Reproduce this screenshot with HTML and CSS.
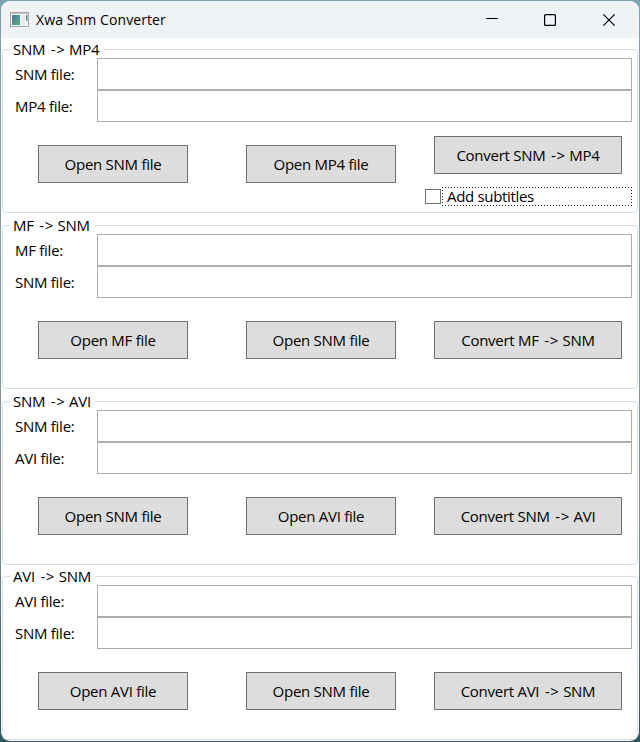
FILE: index.html
```html
<!DOCTYPE html>
<html lang="en">
<head>
<meta charset="utf-8">
<title>Xwa Snm Converter</title>
<link rel="stylesheet" href="styles.css">
</head>
<body>
<div class="window">
  <header class="titlebar">
    <svg class="app-icon" width="19" height="15" viewBox="0 0 19 15">
      <defs><linearGradient id="g" x1="0" y1="0" x2="1" y2="1"><stop offset="0" stop-color="#4473a5"/><stop offset="1" stop-color="#5bb37c"/></linearGradient></defs>
      <rect x=".5" y=".5" width="18" height="14" fill="#f5f6f7" stroke="#a2a6a9"/>
      <path d="M1 1.5h17" stroke="#c4c8ca"/>
      <rect x="2" y="3" width="8" height="10" fill="url(#g)"/>
      <rect x="11" y="3" width="4" height="10" fill="#e7ebec"/>
      <rect x="16" y="3" width="1.500" height="6" fill="url(#g)"/>
    </svg>
    <h1 class="title">Xwa Snm Converter</h1>
    <svg class="controls" width="132" height="14" viewBox="0 0 132 14" fill="none" stroke="#000" stroke-width="1.2">
      <path d="M0 5.5h12" stroke-width="1"/>
      <rect x="58.6" y="1.6" width="10.8" height="10.8" rx="1"/>
      <path d="M117.3 1.3l11.4 11.4M128.7 1.3l-11.4 11.4"/>
    </svg>
  </header>
  <main class="groups">
    <section class="group">
      <h2 class="legend">SNM <span class="arrow">-&gt;</span> MP4</h2>
      <div class="fields">
        <label>SNM file:</label><div class="input"></div>
        <label>MP4 file:</label><div class="input"></div>
      </div>
      <div class="actions">
        <div class="button">Open SNM file</div>
        <div class="button">Open MP4 file</div>
        <div class="convert">
          <div class="button">Convert SNM <span class="arrow">-&gt;</span> MP4</div>
          <div class="check"><span class="box"></span><span class="check-label">Add subtitles</span></div>
        </div>
      </div>
    </section>
    <section class="group">
      <h2 class="legend">MF <span class="arrow">-&gt;</span> SNM</h2>
      <div class="fields">
        <label>MF file:</label><div class="input"></div>
        <label>SNM file:</label><div class="input"></div>
      </div>
      <div class="actions">
        <div class="button">Open MF file</div>
        <div class="button">Open SNM file</div>
        <div class="button wide">Convert MF <span class="arrow">-&gt;</span> SNM</div>
      </div>
    </section>
    <section class="group short">
      <h2 class="legend">SNM <span class="arrow">-&gt;</span> AVI</h2>
      <div class="fields">
        <label>SNM file:</label><div class="input"></div>
        <label>AVI file:</label><div class="input"></div>
      </div>
      <div class="actions">
        <div class="button">Open SNM file</div>
        <div class="button">Open AVI file</div>
        <div class="button wide">Convert SNM <span class="arrow">-&gt;</span> AVI</div>
      </div>
    </section>
    <section class="group">
      <h2 class="legend">AVI <span class="arrow">-&gt;</span> SNM</h2>
      <div class="fields">
        <label>AVI file:</label><div class="input"></div>
        <label>SNM file:</label><div class="input"></div>
      </div>
      <div class="actions">
        <div class="button">Open AVI file</div>
        <div class="button">Open SNM file</div>
        <div class="button wide">Convert AVI <span class="arrow">-&gt;</span> SNM</div>
      </div>
    </section>
  </main>
</div>
</body>
</html>
```
FILE: styles.css
```css
* { box-sizing: border-box; }
body {
  margin: 0;
  width: 640px;
  height: 742px;
  padding: 1px;
  overflow: hidden;
  background: linear-gradient(180deg, #7fa3ae 0, #8b9ba3 20%, #858d94 70%, #2f5860 97%, #2f5860 100%);
  font: 15px/20px "Open Sans", "Noto Sans", sans-serif;
  letter-spacing: -0.27px;
  color: #000;
}
.window {
  height: 740px;
  border-radius: 9px;
  overflow: hidden;
  background: #fff;
}
.titlebar {
  display: flex;
  align-items: center;
  height: 37px;
  padding: 0 21px 0 9px;
  background: #eff3f5;
}
.title {
  margin: 0 0 0 7px;
  font-size: 14px;
  font-weight: 400;
  letter-spacing: 0.1px;
}
.controls { margin-left: auto; }
.arrow { margin-left: 2px; letter-spacing: 0.6px; }
.groups {
  display: flex;
  flex-direction: column;
  padding: 0 1px;
}
.group {
  height: 164px;
  margin: 11px 0 1px;
  border: 1px solid #d5dfe5;
  border-radius: 4px;
}
.group.short { margin-bottom: 0; }
.legend {
  width: fit-content;
  height: 20px;
  margin: -11px 0 0 7px;
  padding: 0 4px 0 3px;
  background: #fff;
  font-size: inherit;
  font-weight: 400;
}
.fields {
  display: grid;
  grid-template-columns: 85px 535px;
  grid-auto-rows: 32px;
  margin: -1px 0 0 9px;
}
.fields label { padding: 6px 0 0 3px; }
.input { border: 1px solid #abadb3; background: #fff; }
.actions {
  display: flex;
  align-items: flex-start;
  padding: 23px 0 0 35px;
}
.button {
  width: 150px;
  height: 38px;
  margin-right: 58px;
  border: 1px solid #707070;
  background: #ddd;
  line-height: 36px;
  text-align: center;
}
.button + .button.wide { margin-right: 0; }
.button:nth-child(2) { margin-right: 38px; }
.wide, .convert .button { width: 188px; }
.convert { margin-top: -9px; }
.convert .button { margin: 0; }
.check {
  display: flex;
  align-items: center;
  width: 207px;
  height: 19px;
  margin: 13px 0 0 -9px;
}
.box {
  width: 16px;
  height: 15px;
  margin-right: 1px;
  border: 1px solid #707070;
}
.check-label {
  flex: 1;
  height: 19px;
  padding: 1px 0 0 5px;
  background:
    repeating-linear-gradient(90deg, #222 0 1px, transparent 1px 3px) top / 100% 1px no-repeat,
    repeating-linear-gradient(90deg, #222 0 1px, transparent 1px 3px) bottom / 100% 1px no-repeat,
    repeating-linear-gradient(180deg, #222 0 1px, transparent 1px 3px) left / 1px 100% no-repeat,
    repeating-linear-gradient(180deg, #222 0 1px, transparent 1px 3px) right / 1px 100% no-repeat;
  letter-spacing: -0.32px;
  line-height: 16px;
}
```
